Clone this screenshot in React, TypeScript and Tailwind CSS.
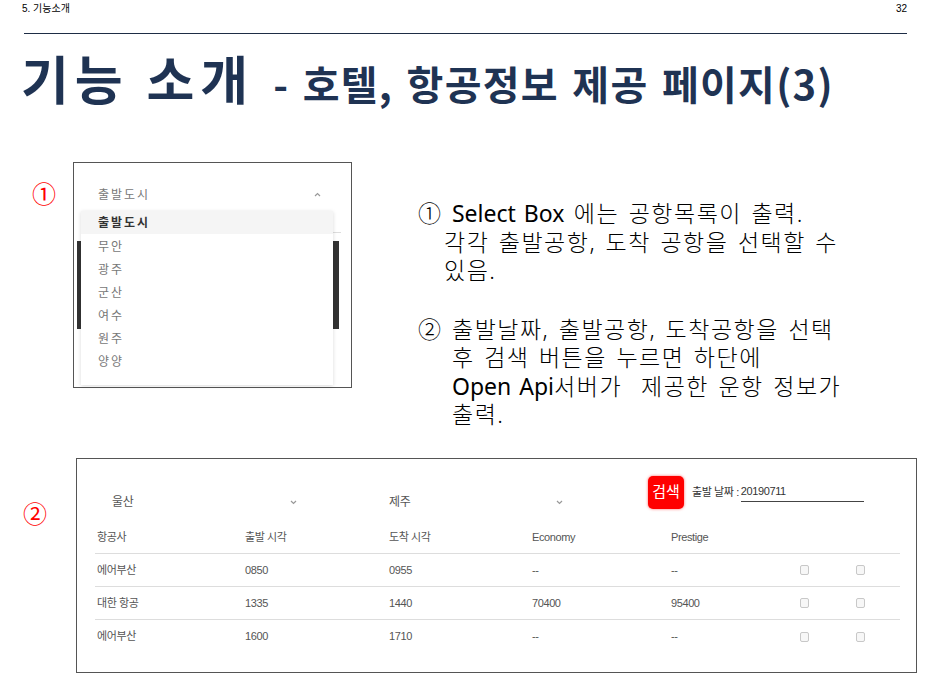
const cities = ["무안", "광주", "군산", "여수", "원주", "양양"];

const flights = [
  { airline: "에어부산", dep: "0850", arr: "0955", economy: "--", prestige: "--" },
  { airline: "대한 항공", dep: "1335", arr: "1440", economy: "70400", prestige: "95400" },
  { airline: "에어부산", dep: "1600", arr: "1710", economy: "--", prestige: "--" },
];

const cols = "grid grid-cols-[150px_144px_143px_139px_129px_56px_44px]";

function Caret({ up }: { up?: boolean }) {
  return (
    <svg width="7" height="5" viewBox="0 0 7 5" className="text-[#999]">
      <path
        d={up ? "M1 4 L3.5 1.5 L6 4" : "M1 1 L3.5 3.5 L6 1"}
        fill="none"
        stroke="currentColor"
        strokeWidth="1.2"
      />
    </svg>
  );
}

function Check() {
  return <span className="block h-[10px] w-[9px] rounded-[2px] border border-[#c8c8c8] bg-[#f7f7f7]" />;
}

function Latin({ children }: { children: React.ReactNode }) {
  return <span className="inline-block align-top font-normal leading-[28px] tracking-[0px]">{children}</span>;
}

function CityDropdown() {
  return (
    <div className="relative h-[226px] w-[279px] border border-[#555] bg-white">
      <span className="absolute left-[3px] top-[78px] h-[88px] w-[4px] bg-[#333]" />
      <span className="absolute left-[258px] top-[78px] h-[88px] w-[7px] bg-[#333]" />
      <span className="absolute left-[259px] top-[69px] h-px w-[8px] bg-[#ddd]" />
      <div className="ml-[7px] mt-[15px] flex h-[33px] w-[252px] items-center justify-between pl-[17px] pr-[12px] text-[12px] tracking-[2px] text-[#777]">
        <span>출발도시</span>
        <Caret up />
      </div>
      <div className="relative ml-[7px] w-[252px] bg-white text-[12px] tracking-[2px] text-[#777] shadow-[0_1px_4px_rgba(0,0,0,0.15)]">
        <div className="flex h-[23px] items-center bg-[#f5f5f5] pl-[17px] pt-[1px] font-bold text-[#333]">출발도시</div>
        {cities.map((c) => (
          <div key={c} className="flex h-[23px] items-center pl-[17px] pt-[3px]">
            {c}
          </div>
        ))}
        <div className="h-[13px]" />
      </div>
    </div>
  );
}

function FlightPanel() {
  return (
    <div className="h-[215px] w-[841px] border border-[#555] bg-white font-['Liberation_Sans','Noto_Sans_CJK_KR',sans-serif] text-[11px] tracking-[-0.4px] text-[#555]">
      <div className="flex h-[63px] items-start pt-[17px]">
        <div className="ml-[18px] mt-[11px] flex h-[30px] w-[210px] items-center justify-between pl-[17px] pr-[8px]">
          <span className="text-[12px]">울산</span>
          <Caret />
        </div>
        <div className="ml-[68px] mt-[11px] flex h-[30px] w-[200px] items-center justify-between pl-[16px] pr-[10px]">
          <span className="text-[12px]">제주</span>
          <Caret />
        </div>
        <div className="ml-[75px] flex items-center">
          <span className="flex h-[33px] w-[36px] items-center justify-center rounded-[5px] bg-[#ff0000] text-[15px] tracking-normal text-white shadow-[0_0_3px_rgba(255,0,0,0.6)]">
            검색
          </span>
          <span className="ml-[8px] text-[#333]">출발 날짜 :</span>
          <span className="ml-[2px] w-[123px] border-b border-[#444] pb-[1px] text-[#333]">20190711</span>
        </div>
      </div>
      <div className="ml-[18px] w-[805px]">
        <div className={`${cols} h-[32px] items-center border-b border-[#ddd]`}>
          <span className="pl-[2px]">항공사</span>
          <span>출발 시각</span>
          <span>도착 시각</span>
          <span>Economy</span>
          <span>Prestige</span>
          <span />
          <span />
        </div>
        {flights.map((f, i) => (
          <div
            key={i}
            className={`${cols} h-[33px] items-center ${i < flights.length - 1 ? "border-b border-[#ddd]" : ""}`}
          >
            <span className="pl-[2px]">{f.airline}</span>
            <span>{f.dep}</span>
            <span>{f.arr}</span>
            <span>{f.economy}</span>
            <span>{f.prestige}</span>
            <Check />
            <Check />
          </div>
        ))}
      </div>
    </div>
  );
}

export default function App() {
  return (
    <div className="h-[687px] w-[931px] overflow-hidden bg-white font-['Noto_Sans','Noto_Sans_CJK_KR',sans-serif]">
      <header className="flex h-[16px] justify-between pl-[22px] pr-[24px] pt-[1px] font-['Liberation_Sans','Noto_Sans_CJK_KR',sans-serif] text-[10px] text-black">
        <span>5. 기능소개</span>
        <span>32</span>
      </header>
      <div className="ml-[24px] mr-[24px] mt-[17px] h-px bg-[#1e2d45]" />

      <h1 className="ml-[21px] mt-[14px] flex h-[60px] items-baseline whitespace-nowrap font-['Noto_Sans_CJK_KR',sans-serif] font-bold leading-[60px] text-[#1f3353]">
        <span className="text-[52px] tracking-[6px]">기능 소개</span>
        <span className="ml-[19px] text-[40px] tracking-[1.3px] [word-spacing:3px]">- 호텔, 항공정보 제공 페이지(3)</span>
      </h1>

      <section className="mt-[54px] flex h-[294px]">
        <span className="ml-[32px] mt-[20px] text-[24px] leading-none text-[#ff0000]">①</span>
        <div className="ml-[17px]">
          <CityDropdown />
        </div>
        <div className="ml-[66px] mt-[37px] whitespace-nowrap text-[23px] font-light leading-[28.5px] tracking-[1.5px] text-black [word-spacing:2px]">
          <p>
            ① <Latin>Select Box</Latin> 에는 공항목록이 출력.
          </p>
          <p className="pl-[26px]">각각 출발공항, 도착 공항을 선택할 수</p>
          <p className="pl-[26px]">있음.</p>
          <p className="mt-[30px]">② 출발날짜, 출발공항, 도착공항을 선택</p>
          <p className="pl-[34px]">후 검색 버튼을 누르면 하단에</p>
          <p className="pl-[34px]">
            <Latin>Open Api</Latin>서버가 &nbsp;제공한 운항 정보가
          </p>
          <p className="pl-[34px]">출력.</p>
        </div>
      </section>

      <section className="flex">
        <span className="ml-[23px] mt-[46px] text-[24px] leading-none text-[#ff0000]">②</span>
        <div className="ml-[29px] mt-[2px]">
          <FlightPanel />
        </div>
      </section>
    </div>
  );
}
